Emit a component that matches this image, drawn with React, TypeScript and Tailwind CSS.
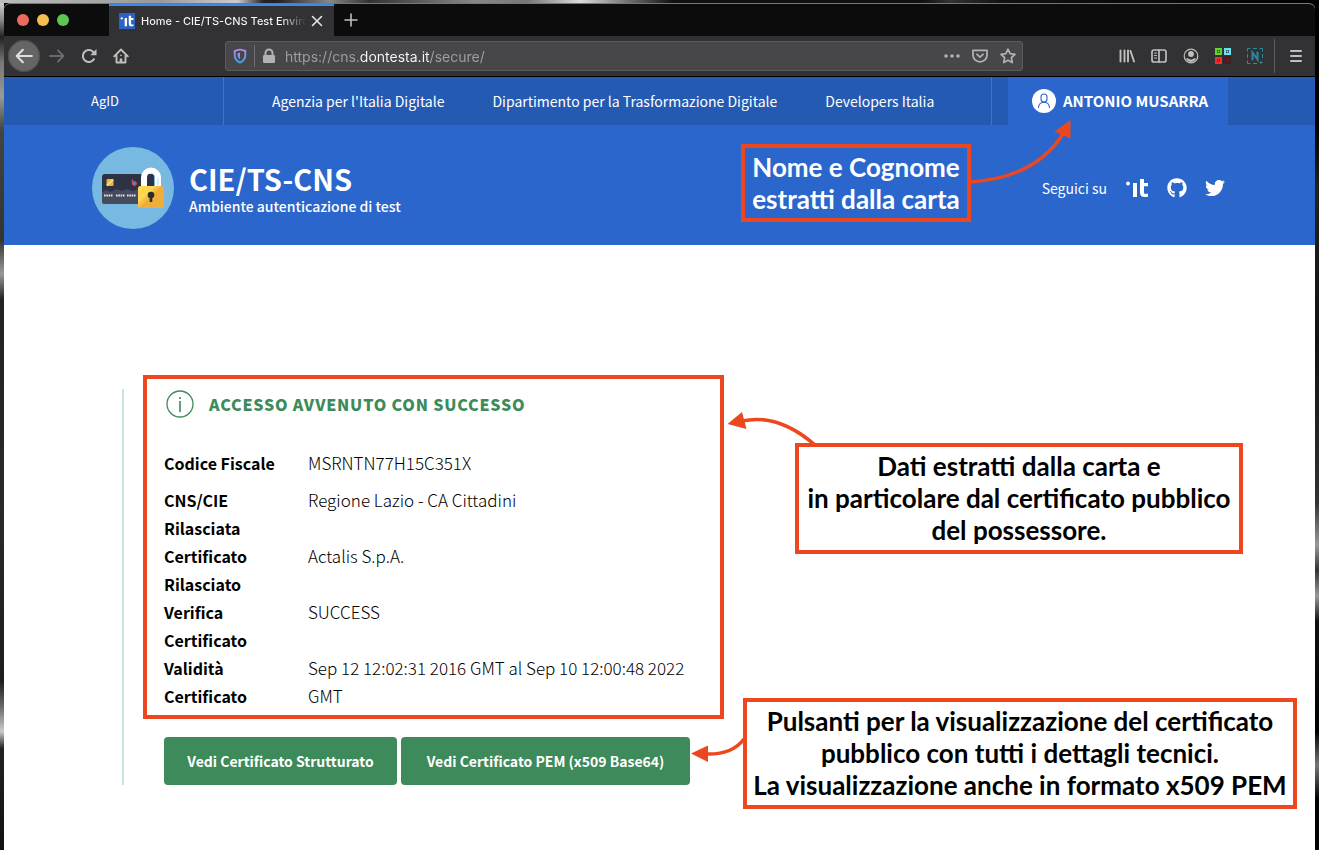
import type { ReactNode } from "react";
import { FaGithub, FaTwitter } from "react-icons/fa";

const NAV = ["Agenzia per l'Italia Digitale", "Dipartimento per la Trasformazione Digitale", "Developers Italia"];

const ROWS: [string, string][] = [
  ["CNS/CIE Rilasciata", "Regione Lazio - CA Cittadini"],
  ["Certificato Rilasciato", "Actalis S.p.A."],
  ["Verifica Certificato", "SUCCESS"],
  ["Validità Certificato", "Sep 12 12:02:31 2016 GMT al Sep 10 12:00:48 2022 GMT"],
];

function ItLogo({ className }: { className: string }) {
  return (
    <svg viewBox="0 0 24 20" className={className} fill="currentColor" aria-hidden="true">
      <circle cx="3" cy="5.500" r="1.900" />
      <rect x="8" y="5" width="4" height="14" />
      <path d="M15 1h4v4h4v3.200h-4v6c0 1.300.6 1.700 1.600 1.700.8 0 1.500-.1 2.200-.3l.4 2.900c-1.200.4-2.300.6-3.600.6-3 0-4.600-1.500-4.600-4.500z" />
    </svg>
  );
}

function ToolButton({ label, className = "text-[#bfbfc0]", children }: { label: string; className?: string; children: ReactNode }) {
  return (
    <button type="button" aria-label={label} className={`flex size-8 shrink-0 items-center justify-center rounded-full ${className}`}>
      {children}
    </button>
  );
}

function Stroke({ children, className = "size-4", width = 2 }: { children: ReactNode; className?: string; width?: number }) {
  return (
    <svg viewBox="0 0 16 16" className={className} fill="none" stroke="currentColor" strokeWidth={width} strokeLinecap="round" strokeLinejoin="round" aria-hidden="true">
      {children}
    </svg>
  );
}

function TabBar() {
  return (
    <div className="flex h-8 items-stretch bg-[#0c0c0d]">
      <div className="flex w-[105px] items-center gap-2 pl-[13px]">
        <span className="size-3 rounded-full bg-[#ed6a5e]" />
        <span className="size-3 rounded-full bg-[#f5bf4f]" />
        <span className="size-3 rounded-full bg-[#61c554]" />
      </div>
      <div className="flex w-[225px] items-center border-t-2 border-[#3f87e8] bg-[#323234] pl-[10px]">
        <span className="flex size-4 shrink-0 items-center justify-center bg-[#2b62c4] text-white">
          <ItLogo className="h-3 w-[14px]" />
        </span>
        <span className="ml-[6px] w-[165px] overflow-hidden whitespace-nowrap bg-linear-to-r from-[#f9f9fa] from-85% to-transparent bg-clip-text text-[11px] font-medium text-transparent">
          Home - CIE/TS-CNS Test Environment
        </span>
        <button type="button" aria-label="Chiudi scheda" className="ml-[3px] flex size-4 shrink-0 items-center justify-center text-[#e4e4e5]">
          <Stroke width={1.600} className="size-4"><path d="M3.500 3.500l9 9M12.500 3.500l-9 9" /></Stroke>
        </button>
      </div>
      <button type="button" aria-label="Nuova scheda" className="flex w-[34px] items-center justify-center text-[#bfbfc0]">
        <Stroke width={1.600}><path d="M8 2v12M2 8h12" /></Stroke>
      </button>
    </div>
  );
}

function Toolbar() {
  return (
    <div className="flex h-[41px] items-center border-b border-black bg-[#323234] pr-[3px] pl-1 font-[Inter,sans-serif]">
      <ToolButton label="Indietro" className="bg-[#656566] text-[#e0e0e0] ring-1 ring-[#4a4a4c] ring-inset">
        <Stroke width={1.800} className="size-[18px]"><path d="M15 8H1.500M7 2.500L1.500 8 7 13.500" /></Stroke>
      </ToolButton>
      <ToolButton label="Avanti" className="ml-px text-[#6b6b6d]">
        <Stroke width={1.800}><path d="M1 8h13.500M9 2.500L14.500 8 9 13.500" /></Stroke>
      </ToolButton>
      <ToolButton label="Ricarica">
        <svg viewBox="0 0 16 16" className="size-4" fill="none" aria-hidden="true">
          <path d="M13.300 10.500A6 6 0 1 1 12 3.700L14 5.500" stroke="currentColor" strokeWidth="2" />
          <path d="M15.500 1v6.200H9.300z" fill="currentColor" />
        </svg>
      </ToolButton>
      <ToolButton label="Pagina iniziale">
        <Stroke width={1.900}>
          <path d="M1.200 8.300L8 1.500l6.800 6.800M3.500 7.500v7h9v-7" />
          <path d="M8 14.500V10.500" strokeWidth="2.600" strokeLinecap="butt" />
          <path d="M8 7.200v.2" strokeWidth="1.600" />
        </Stroke>
      </ToolButton>
      <div className="ml-[88px] flex h-[30px] max-w-[798px] flex-1 items-center rounded-[3px] border border-[#5c5c5e] bg-[#474749] px-[6px] text-[#b1b1b3]">
        <svg viewBox="0 0 16 16" className="size-4" fill="none" aria-hidden="true">
          <defs>
            <linearGradient id="shield" x1="0" y1="0" x2="0" y2="1">
              <stop offset="0" stopColor="#b98af5" />
              <stop offset="1" stopColor="#3aa5f0" />
            </linearGradient>
          </defs>
          <path d="M8 1.500l5.300 1.400v4.300c0 3.300-2 5.800-5.300 7.400-3.300-1.600-5.300-4.100-5.300-7.400V2.900z" stroke="url(#shield)" strokeWidth="1.800" strokeLinejoin="round" />
          <path d="M8 4.700v6.800C6 10.200 5.600 8.600 5.600 7V5.200z" fill="url(#shield)" />
        </svg>
        <span className="ml-[6px] h-[22px] w-px bg-[#6e6e70]" />
        <svg viewBox="0 0 16 16" className="ml-[6px] size-4" fill="none" aria-hidden="true">
          <path d="M4.500 8V5a3.500 3.500 0 0 1 7 0v3" stroke="currentColor" strokeWidth="2" />
          <rect x="2" y="7" width="12" height="8" rx="1.200" fill="currentColor" />
        </svg>
        <input
          type="text"
          aria-label="Indirizzo"
          defaultValue="https://cns.dontesta.it/secure/"
          className="ml-2 min-w-0 flex-1 bg-[linear-gradient(to_right,#a0a0a2_75px,#f9f9fa_75px,#f9f9fa_145px,#a0a0a2_145px)] bg-clip-text text-[14px] text-transparent outline-none"
        />
        <div className="flex items-center gap-3">
          <svg viewBox="0 0 16 16" className="size-4" fill="currentColor" aria-hidden="true">
            <circle cx="2" cy="8" r="1.800" /><circle cx="8" cy="8" r="1.800" /><circle cx="14" cy="8" r="1.800" />
          </svg>
          <Stroke width={1.800}>
            <path d="M1 2.300h14v5a7 6.500 0 0 1-14 0z" /><path d="M5 6.300l3 2.800 3-2.800" />
          </Stroke>
          <Stroke width={1.700}>
            <path d="M8 1.200l2.100 4.500 4.900.6-3.600 3.400.9 4.900L8 12.200l-4.300 2.400.9-4.900L1 6.300l4.900-.6z" />
          </Stroke>
        </div>
      </div>
      <div className="ml-auto flex items-center">
        <ToolButton label="Libreria">
          <Stroke width={1.900}><path d="M1.500 2.500v11M5.500 2.500v11M9 2.500v11M11.500 3l3.500 10.500" /></Stroke>
        </ToolButton>
        <ToolButton label="Barra laterale">
          <Stroke width={1.700}><rect x="1" y="2" width="14" height="12" rx="2" /><path d="M8 2v12" /><path d="M3.500 5h2M3.500 7.500h2M3.500 10h2" strokeWidth="1.100" /></Stroke>
        </ToolButton>
        <ToolButton label="Account">
          <svg viewBox="0 0 16 16" className="size-4" aria-hidden="true">
            <circle cx="8" cy="8" r="6.800" fill="none" stroke="currentColor" strokeWidth="1.200" />
            <circle cx="8" cy="6" r="2.900" fill="currentColor" />
            <path d="M3 10.800c1.200-1 2.400-.6 3 .1 1 .8 3 .8 4 0 .6-.7 1.800-1.100 3-.1-1.500 2.700-3.300 3.200-5 3.200s-3.500-.5-5-3.200z" fill="currentColor" />
          </svg>
        </ToolButton>
        <ToolButton label="Codici QR">
          <svg viewBox="0 0 16 16" className="size-4" fill="none" strokeWidth="2" aria-hidden="true">
            <rect x="1" y="1" width="5" height="5" stroke="#5fd629" /><path d="M2.500 3.500h2" stroke="#5fd629" />
            <rect x="10" y="1" width="5" height="5" stroke="#62e3ef" /><path d="M11.500 3.500h2" stroke="#62e3ef" />
            <rect x="1" y="10" width="5" height="5" stroke="#f03030" /><path d="M2.500 12.500h2" stroke="#f03030" />
            <rect x="8" y="8" width="8" height="8" fill="#471b20" /><path d="M9 9l6 6M15 9.500l-5 5" stroke="#6b1c24" strokeWidth="1" />
          </svg>
        </ToolButton>
        <ToolButton label="Cattura">
          <svg viewBox="0 0 16 16" className="size-4" fill="none" stroke="#2c8aa0" aria-hidden="true">
            <path d="M.5 3.500v-3h3M6 .5h4M12.500.5h3v3M.5 6v4M15.500 6v4M.5 12.500v3h3M6 15.500h4M12.500 14.500h3M14 13v3" />
            <path d="M5.500 12.200V4.500l5 7V3.800" strokeWidth="2" />
          </svg>
        </ToolButton>
        <span className="ml-[3px] h-[34px] w-px bg-[#5c5c5e]" />
        <ToolButton label="Menu" className="ml-[5px] text-[#bfbfc0]">
          <svg viewBox="0 0 16 16" className="size-4" fill="none" stroke="currentColor" strokeWidth="2" strokeLinecap="round" aria-hidden="true">
            <path d="M3 3h10M3 8h10M3 13h10" />
          </svg>
        </ToolButton>
      </div>
    </div>
  );
}

function SlimHeader() {
  return (
    <div className="bg-[#255ab3] text-white">
      <div className="mx-auto flex h-12 max-w-[1137px] items-stretch text-[14px] leading-6">
        <a href="#agid" className="flex w-[133px] shrink-0 items-center border-r border-[#3a76cb] text-[13px]">AgID</a>
        <nav className="flex flex-1 items-center border-r border-[#3a76cb] pl-6">
          {NAV.map((item) => (
            <a key={item} href="#enti" className="px-6 whitespace-nowrap">{item}</a>
          ))}
        </nav>
        <button type="button" className="ml-4 flex w-[220px] shrink-0 items-center gap-[7px] bg-[#2b66cc] pl-6 text-[15px] font-bold whitespace-nowrap">
          <span className="flex size-6 items-center justify-center rounded-full bg-white text-[#2b66cc]">
            <svg viewBox="0 0 24 24" className="size-6" fill="none" stroke="currentColor" strokeWidth="1.100" aria-hidden="true">
              <rect x="9" y="5" width="6" height="8" rx="3" />
              <path d="M6.500 19c0-3 1.500-5 4-5.500h3c2.500.5 4 2.500 4 5.500" />
            </svg>
          </span>
          ANTONIO MUSARRA
        </button>
      </div>
    </div>
  );
}

function CardLogo() {
  return (
    <svg viewBox="0 0 82 82" className="size-[82px]" aria-hidden="true">
      <circle cx="41" cy="41" r="41" fill="#78b9e2" />
      <rect x="10" y="27" width="52" height="30" rx="3" fill="#2d3245" />
      <path d="M10 45l4-2 5 2 5-3 6 2 5-2 6 2 5-2 16-1v13a3 3 0 0 1-3 3H13a3 3 0 0 1-3-3z" fill="#454a5c" />
      <rect x="14.500" y="32" width="7" height="7" rx="1" fill="#e9b53c" />
      <path d="M15 38.500l6-6" stroke="#f7da76" strokeWidth="2" />
      <path d="M40.500 32.500v5" stroke="#e2474a" strokeWidth="1.500" />
      <circle cx="42.500" cy="36.500" r="1.900" fill="#577fc0" stroke="#e2474a" strokeWidth="1" />
      <path d="M12 48.500h9M24 48.500h9M35 48.500h9" stroke="#e6e8ee" strokeWidth="2" strokeDasharray="1.600 .7" />
      <path d="M52 42V30.500a7 7 0 0 1 14 0V42" fill="none" stroke="#fff" strokeWidth="6" />
      <path d="M66 30.500V42" stroke="#e3e8f2" strokeWidth="2" />
      <rect x="46" y="39" width="26" height="22" rx="3" fill="#efae3b" />
      <path d="M49 39h16L46 57V42a3 3 0 0 1 3-3z" fill="#ffd84f" />
      <path d="M65 39h4L46 61v-4z" fill="#f5c243" />
      <circle cx="59" cy="48" r="3.300" fill="#2e2b2b" />
      <path d="M57.700 49h2.600v6h-2.600z" fill="#2e2b2b" />
    </svg>
  );
}

function Note({ className, children }: { className: string; children: ReactNode }) {
  return (
    <p className={`absolute flex flex-col items-center border-4 border-[#ed4720] pt-[3px] font-[Lato,sans-serif] text-[26px] leading-8 font-bold whitespace-nowrap ${className}`}>
      {children}
    </p>
  );
}

function Arrow({ className, viewBox, curve, head }: { className: string; viewBox: string; curve: string; head: string }) {
  return (
    <svg viewBox={viewBox} className={`pointer-events-none absolute ${className}`} aria-hidden="true">
      <path d={curve} fill="none" stroke="#ed4720" strokeWidth="3.500" />
      <path d={head} fill="#ed4720" />
    </svg>
  );
}

function Header() {
  return (
    <header className="bg-[#2b66cc] text-white">
      <div className="relative mx-auto flex h-[120px] max-w-[1137px] items-center pt-[6px]">
        <a href="#home" className="ml-px flex items-center gap-[15px]">
          <CardLogo />
          <span className="flex flex-col pt-[3px]">
            <span className="text-[29px] leading-8 font-bold">CIE/TS-CNS</span>
            <span className="text-[14px] leading-6 font-medium">Ambiente autenticazione di test</span>
          </span>
        </a>
        <div className="mr-[3px] ml-auto flex items-center gap-[18px] text-[14px]">
          <span>Seguici su</span>
          <a href="#italia" aria-label="Developers Italia"><ItLogo className="h-5 w-6" /></a>
          <a href="#github" aria-label="GitHub"><FaGithub className="size-5" /></a>
          <a href="#twitter" aria-label="Twitter"><FaTwitter className="size-5" /></a>
        </div>
        <Note className="top-[19px] left-[650px] h-[78px] w-[230px]">
          <span>Nome e Cognome</span>
          <span>estratti dalla carta</span>
        </Note>
        <Arrow className="-top-[5px] left-[879px] h-[64px] w-[101px]" viewBox="970 120 101 64" curve="M970 182Q1035 178 1063 134" head="M1070.500 120L1054.500 131.500L1070.500 138.500z" />
      </div>
    </header>
  );
}

function Result() {
  return (
    <main className="relative mx-auto w-full max-w-[1137px] pt-36 text-black">
      <section className="ml-[31px] max-w-[595px] border-l-2 border-[#c9e6dc] pl-10">
        <h1 className="flex h-[30px] items-center gap-[13px] text-[16px] leading-7 font-black tracking-wider text-[#3d8a5a]">
          <svg viewBox="0 0 32 32" className="size-8" fill="none" stroke="currentColor" strokeWidth="1.300" aria-hidden="true">
            <circle cx="16" cy="16" r="13" />
            <path d="M16 13v11M16 9v2" strokeWidth="1.600" />
          </svg>
          ACCESSO AVVENUTO CON SUCCESSO
        </h1>
        <dl className="mt-[30px] grid grid-cols-[120px_1fr] gap-x-6 text-[17px] leading-7">
          <dt className="mb-[9px] text-[16px] leading-7 font-bold">Codice Fiscale</dt>
          <dd className="mb-[9px] font-light">MSRNTN77H15C351X</dd>
          {ROWS.map(([name, value]) => (
            <div key={name} className="contents">
              <dt className="w-[100px] text-[16px] leading-7 font-bold">{name}</dt>
              <dd className="font-light">{value}</dd>
            </div>
          ))}
        </dl>
        <div className="mt-[27px] flex gap-1 text-[14px] font-bold whitespace-nowrap text-white">
          <button type="button" className="h-12 w-[233px] rounded bg-[#3d8a5a]">Vedi Certificato Strutturato</button>
          <button type="button" className="h-12 w-[289px] rounded bg-[#3d8a5a]">Vedi Certificato PEM (x509 Base64)</button>
        </div>
      </section>
      <div className="pointer-events-none absolute top-[130px] left-[52px] h-[344px] w-[581px] border-4 border-[#ed4720]" />
      <Note className="top-[198px] left-[704px] h-[111px] w-[448px]">
        <span>Dati estratti dalla carta e</span>
        <span>in particolare dal certificato pubblico</span>
        <span>del possessore.</span>
      </Note>
      <Arrow className="top-[165px] left-[636px] h-[36px] w-[92px]" viewBox="727 410 92 36" curve="M742 421Q778 413 815 445" head="M727.500 424L742 412L746.500 429z" />
      <Note className="top-[453px] left-[652px] h-[111px] w-[554px]">
        <span>Pulsanti per la visualizzazione del certificato</span>
        <span>pubblico con tutti i dettagli tecnici.</span>
        <span>La visualizzazione anche in formato x509 PEM</span>
      </Note>
      <Arrow className="top-[490px] left-[600px] h-[30px] w-[55px]" viewBox="691 735 55 30" curve="M706 754Q732 755 744 739" head="M691 753.500L708 745.500L708 762z" />
    </main>
  );
}

export default function App() {
  return (
    <div className="bg-[linear-gradient(to_right,#bbb_0%,#999_12%,#ccc_18%,#222_20%,#222_21%,#888_25%,#333_28%,#888_36%,#777_40%,#ddd_44%,#666_48%,#111_51%,#111_70%,#333_72%,#111_76%,#000_100%)] pt-[3px]">
      <div className="flex min-h-[calc(100vh-3px)]">
        <div className="w-1 shrink-0 bg-[linear-gradient(to_bottom,#ccc_0%,#888_2%,#222_4%,#777_7%,#999_11%,#444_15%,#333_28%,#999_32%,#222_35%,#2b2a27_60%,#1e1d1a_80%,#666_83%,#ccc_86%,#222_88%,#111_100%)]" />
        <div className="flex min-w-0 flex-1 flex-col bg-black">
          <div className="flex flex-1 flex-col overflow-hidden rounded-t-md border-t border-[#77777a] bg-white font-['Noto_Sans_CJK_SC',sans-serif]">
            <div className="font-[Inter,sans-serif]"><TabBar /></div>
            <Toolbar />
            <SlimHeader />
            <Header />
            <Result />
          </div>
        </div>
        <div className="w-1 shrink-0 bg-[linear-gradient(to_bottom,#000_0%,#000_14%,#222_22%,#111_40%,#333_59%,#999_64%,#333_67%,#999_70%,#111_73%,#000_86%,#777_90%,#000_94%)]" />
      </div>
    </div>
  );
}
